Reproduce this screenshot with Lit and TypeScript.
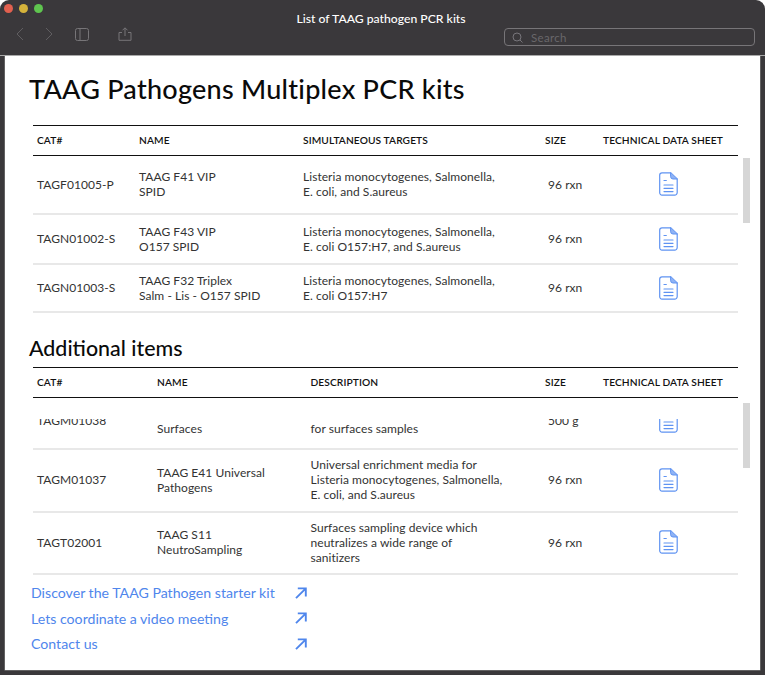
import { LitElement, html, css, svg } from "lit";
import { customElement } from "lit/decorators.js";

const doc = html`<svg class="doc" viewBox="0 0 19 24" fill="none" stroke="#5f93f2" stroke-width="1.2" stroke-linejoin="round" stroke-linecap="round"><path d="M3 .8h8.6L18.2 7v13.6a2.5 2.5 0 0 1-2.5 2.5H3a2.3 2.3 0 0 1-2.3-2.3V3A2.3 2.3 0 0 1 3 .8Z"/><path d="M11.6.8v3.9A2.4 2.4 0 0 0 14 7h4.2" fill="#8fb3f5" stroke-width="1"/><path d="M5 8.5h2.3M5 13h9M5 16.3h9M5 19.6h9"/></svg>`;
const arrow = svg`<svg class="arrow" viewBox="0 0 12 12" fill="none" stroke="#4f86ec" stroke-width="1.9"><path d="M1 11.2 10.6 1.6M2.8 1.4h8v8"/></svg>`;

interface Row { h: string; cat: string; name: unknown; text: unknown; size: string; }

const first: Row[] = [
  { h: "h59", cat: "TAGF01005-P", name: html`TAAG F41 VIP<br />SPID`, text: html`Listeria monocytogenes, Salmonella,<br />E. coli, and S.aureus`, size: "96 rxn" },
  { h: "h50", cat: "TAGN01002-S", name: html`TAAG F43 VIP<br />O157 SPID`, text: html`Listeria monocytogenes, Salmonella,<br />E. coli O157:H7, and S.aureus`, size: "96 rxn" },
  { h: "h48", cat: "TAGN01003-S", name: html`TAAG F32 Triplex<br />Salm - Lis - O157 SPID`, text: html`Listeria monocytogenes, Salmonella,<br />E. coli O157:H7`, size: "96 rxn" },
];
const second: Row[] = [
  { h: "h55", cat: "TAGM01038", name: html`&nbsp;<br />Surfaces`, text: html`&nbsp;<br />for surfaces samples`, size: "500 g" },
  { h: "h63", cat: "TAGM01037", name: html`TAAG E41 Universal<br />Pathogens`, text: html`Universal enrichment media for<br />Listeria monocytogenes, Salmonella,<br />E. coli, and S.aureus`, size: "96 rxn" },
  { h: "h62", cat: "TAGT02001", name: html`TAAG S11<br />NeutroSampling`, text: html`Surfaces sampling device which<br />neutralizes a wide range of<br />sanitizers`, size: "96 rxn" },
];

@customElement("app-root")
export class AppRoot extends LitElement {
  static styles = css`
    :host { display: block; width: 765px; height: 675px; background: #fff; font-family: Lato, "Noto Sans", sans-serif; color: #222; overflow: hidden; }
    .window { height: 675px; box-sizing: border-box; background: #3a383b; border-radius: 9px 9px 0 0; display: flex; flex-direction: column; padding-bottom: 5px; }
    .bar { height: 55px; flex: none; position: relative; border-bottom: 1px solid #a9a9a9; box-sizing: content-box; }
    .lights { position: absolute; left: 4px; top: 4px; display: flex; gap: 6px; }
    .lights i { width: 9px; height: 9px; border-radius: 50%; }
    .red { background: #e2604f; } .yellow { background: #d5b33b; } .green { background: #5fc54f; }
    .title { position: absolute; left: 0; right: 3px; top: 11px; text-align: center; font-size: 12.2px; line-height: 16px; color: #fff; font-weight: 500; }
    .tools { position: absolute; left: 16px; top: 27px; display: flex; align-items: center; }
    .tools svg { display: block; fill: none; stroke: #605e61; stroke-width: 1; }
    .tools .fwd { margin-left: 21px; }
    .tools .side { margin-left: 22px; stroke: #777578; }
    .tools .share { margin-left: 29px; stroke: #777578; }
    .search { position: absolute; left: 504px; top: 28px; width: 251px; height: 18px; box-sizing: border-box; border: 1px solid #777578; border-radius: 4px; display: flex; align-items: center; gap: 8px; padding-left: 7px; color: #69676a; font-size: 11.5px; letter-spacing: .3px; }
    .content { flex: 1; margin: 0 5px; background: #fff; padding: 13px 0 0 24px; box-shadow: 0 0 0 .5px #8a8a8a; }
    h1 { margin: 0 0 16px; font-size: 27px; line-height: 40px; font-weight: 500; color: #0a0a0a; letter-spacing: .26px; }
    h2 { margin: 21px 0 5px; font-size: 21.4px; line-height: 28px; font-weight: 500; color: #0a0a0a; }
    .table { position: relative; width: 705px; margin-left: 4px; }
    .row { display: grid; align-items: center; box-sizing: border-box; font-size: 12px; line-height: 15px; color: #333; letter-spacing: .05px; }
    .t1 .row { grid-template-columns: 106px 164px 242px 58px 130px; }
    .t2 .row { grid-template-columns: 124px 153.5px 234.5px 58px 130px; }
    .head { height: 31px; border-top: 1px solid #111; border-bottom: 1px solid #111; font-size: 10.2px; font-weight: 600; color: #111; letter-spacing: .1px; }
    .body { border-bottom: 2px solid #e8e8e8; }
    .t1 .body { padding-bottom: 1px; }
    .t2 .body { padding-bottom: 2px; }
    .cat { padding-left: 4px; }
    .size { padding-left: 3px; }
    .head .size { padding-left: 0; }
    .tds { display: flex; justify-content: center; }
    .head .tds { justify-content: flex-start; white-space: nowrap; }
    .doc { width: 19px; height: 24px; display: block; }
    .h59 { height: 59px; } .h50 { height: 50px; } .h48 { height: 48px; }
    .h55 { height: 55px; } .h63 { height: 63px; } .h62 { height: 62px; }
    .clip { margin-top: 21px; height: 156px; overflow: hidden; }
    .clip .row:first-child { margin-top: -24px; }
    .thumb { position: absolute; right: -12px; width: 7px; height: 65px; background: #d6d6d6; }
    .t1 .thumb { top: 33px; } .t2 .thumb { top: 36px; }
    .links { margin: 5px 0 0 2px; display: grid; grid-template-columns: 264px 12px; grid-auto-rows: 25.5px; align-items: center; font-size: 14.15px; color: #4f86ec; }
    .arrow { width: 12px; height: 12px; display: block; }
  `;

  private rows(rows: Row[]) {
    return rows.map(
      (r) => html`<div class="row body ${r.h}">
        <div class="cat">${r.cat}</div><div>${r.name}</div><div>${r.text}</div><div class="size">${r.size}</div><div class="tds">${doc}</div>
      </div>`
    );
  }

  private head(third: string) {
    return html`<div class="row head"><div class="cat">CAT#</div><div>NAME</div><div>${third}</div><div class="size">SIZE</div><div class="tds">TECHNICAL DATA SHEET</div></div>`;
  }

  render() {
    return html`<div class="window">
      <div class="bar">
        <div class="lights"><i class="red"></i><i class="yellow"></i><i class="green"></i></div>
        <div class="title">List of TAAG pathogen PCR kits</div>
        <div class="tools">
          <svg width="8" height="14" viewBox="0 0 8 14"><path d="M7 1 1 7l6 6" /></svg>
          <svg class="fwd" width="8" height="14" viewBox="0 0 8 14"><path d="m1 1 6 6-6 6" /></svg>
          <svg class="side" width="14" height="13" viewBox="0 0 14 13"><rect x=".5" y=".5" width="13" height="12" rx="2" /><path d="M5 .5v12" /></svg>
          <svg class="share" width="14" height="14" viewBox="0 0 14 14"><path d="M7 9V1M4.5 3.3 7 .8l2.5 2.5M4 5.5H1v7.8h12V5.5h-3" /></svg>
        </div>
        <div class="search">
          <svg width="11" height="11" viewBox="0 0 11 11" fill="none" stroke="#77757a"><circle cx="5" cy="5" r="4" /><path d="m8 8 2.5 2.5" /></svg>
          <span>Search</span>
        </div>
      </div>
      <div class="content">
        <h1>TAAG Pathogens Multiplex PCR kits</h1>
        <div class="table t1">
          ${this.head("SIMULTANEOUS TARGETS")}
          ${this.rows(first)}
          <div class="thumb"></div>
        </div>
        <h2>Additional items</h2>
        <div class="table t2">
          ${this.head("DESCRIPTION")}
          <div class="clip">${this.rows(second)}</div>
          <div class="thumb"></div>
        </div>
        <div class="links">
          <span>Discover the TAAG Pathogen starter kit</span>${arrow}
          <span>Lets coordinate a video meeting</span>${arrow}
          <span>Contact us</span>${arrow}
        </div>
      </div>
    </div>`;
  }
}
